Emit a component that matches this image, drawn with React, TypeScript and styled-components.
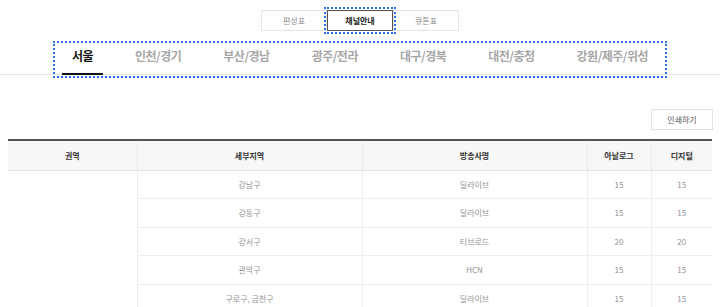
import React from "react";
import styled, { createGlobalStyle } from "styled-components";

const GlobalStyle = createGlobalStyle`
  html, body {
    margin: 0;
    padding: 0;
    background: #ffffff;
    font-family: "Noto Sans CJK KR", "Noto Sans", sans-serif;
    color: #333;
  }
  * { box-sizing: border-box; }
`;

const Page = styled.div`
  width: 720px;
  padding-top: 10px;
`;

const SegmentBar = styled.div`
  display: flex;
  justify-content: center;
`;

const SegmentButton = styled.button<{ $active?: boolean }>`
  width: 66px;
  height: 21px;
  margin: 0;
  padding: 0;
  background: #fff;
  border: 1px solid ${(p) => (p.$active ? "#555" : "#e4e4e4")};
  font-family: inherit;
  font-size: 8px;
  font-weight: ${(p) => (p.$active ? 700 : 400)};
  color: ${(p) => (p.$active ? "#222" : "#8c8c8c")};
  line-height: 19px;
  outline: ${(p) => (p.$active ? "2px dotted #2a6ff0" : "none")};
  outline-offset: 1px;
  position: relative;
  z-index: ${(p) => (p.$active ? 1 : 0)};
`;

const TabNav = styled.nav`
  margin-top: 13px;
  display: flex;
  justify-content: center;
  border-bottom: 1px solid #e6e6e6;
`;

const TabList = styled.ul`
  display: flex;
  gap: 22px;
  list-style: none;
  margin: 0 0 -1px;
  padding: 0 6px;
  outline: 2px dotted #2a6ff0;
  outline-offset: 1px;
`;

const Tab = styled.li<{ $active?: boolean }>`
  height: 31px;
  padding: 3px 10px 0;
  line-height: 18px;
  font-size: 12px;
  letter-spacing: -0.5px;
  font-weight: 700;
  color: ${(p) => (p.$active ? "#111" : "#a6a6a6")};
  border-bottom: 2px solid ${(p) => (p.$active ? "#111" : "transparent")};
  white-space: nowrap;
`;

const ToolRow = styled.div`
  display: flex;
  justify-content: flex-end;
  margin-top: 34px;
  padding-right: 7px;
`;

const PrintButton = styled.button`
  width: 62px;
  height: 21px;
  padding: 0;
  background: #fff;
  border: 1px solid #e2e2e2;
  font-family: inherit;
  font-size: 8px;
  color: #555;
  line-height: 19px;
`;

const Table = styled.table`
  margin: 9px 8px 0;
  width: 704px;
  border-collapse: collapse;
  table-layout: fixed;
  border-top: 2px solid #555;
`;

const HeadCell = styled.th`
  height: 30px;
  background: #f7f7f7;
  font-size: 8px;
  font-weight: 700;
  color: #333;
  border-bottom: 1px solid #e2e2e2;
  border-left: 1px solid #ececec;
  padding: 0;
  &:first-child { border-left: none; }
`;

const Cell = styled.td`
  height: 28.5px;
  padding: 0;
  text-align: center;
  font-size: 8px;
  color: #939393;
  border-bottom: 1px solid #ededed;
  border-left: 1px solid #ededed;
`;

const RegionCell = styled.td`
  padding: 0;
  border: none;
  vertical-align: middle;
`;

const rows = [
  { area: "강남구", name: "딜라이브", analog: "15", digital: "15" },
  { area: "강동구", name: "딜라이브", analog: "15", digital: "15" },
  { area: "강서구", name: "티브로드", analog: "20", digital: "20" },
  { area: "관악구", name: "HCN", analog: "15", digital: "15" },
  { area: "구로구, 금천구", name: "딜라이브", analog: "15", digital: "15" },
];

const tabs = ["서울", "인천/경기", "부산/경남", "광주/전라", "대구/경북", "대전/충청", "강원/제주/위성"];

export default function App() {
  return (
    <>
      <GlobalStyle />
      <Page>
        <SegmentBar>
          <SegmentButton>편성표</SegmentButton>
          <SegmentButton $active>채널안내</SegmentButton>
          <SegmentButton>큐톤표</SegmentButton>
        </SegmentBar>
        <TabNav>
          <TabList>
            {tabs.map((t, i) => (
              <Tab key={t} $active={i === 0}>
                {t}
              </Tab>
            ))}
          </TabList>
        </TabNav>
        <ToolRow>
          <PrintButton>인쇄하기</PrintButton>
        </ToolRow>
        <Table>
          <colgroup>
            <col style={{ width: 129 }} />
            <col style={{ width: 225 }} />
            <col style={{ width: 225 }} />
            <col style={{ width: 64 }} />
            <col style={{ width: 61 }} />
          </colgroup>
          <thead>
            <tr>
              <HeadCell>권역</HeadCell>
              <HeadCell>세부지역</HeadCell>
              <HeadCell>방송사명</HeadCell>
              <HeadCell>아날로그</HeadCell>
              <HeadCell>디지털</HeadCell>
            </tr>
          </thead>
          <tbody>
            {rows.map((r, i) => (
              <tr key={r.area}>
                {i === 0 && <RegionCell rowSpan={rows.length} />}
                <Cell>{r.area}</Cell>
                <Cell>{r.name}</Cell>
                <Cell>{r.analog}</Cell>
                <Cell>{r.digital}</Cell>
              </tr>
            ))}
          </tbody>
        </Table>
      </Page>
    </>
  );
}
